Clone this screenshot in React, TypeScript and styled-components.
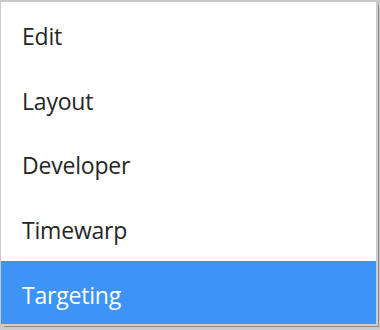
import React from 'react'
import styled, { createGlobalStyle } from 'styled-components'

const GlobalStyle = createGlobalStyle`
  html, body {
    margin: 0;
    padding: 0;
    background: #cacaca;
  }
`

const Frame = styled.div`
  width: 380px;
  height: 330px;
  box-sizing: border-box;
  padding: 2px 4px 0 1px;
  background: #cacaca;
  overflow: hidden;
`

const Menu = styled.ul`
  list-style: none;
  margin: 0;
  padding: 0;
  height: 322px;
  background: #fff;
  overflow: hidden;
  box-shadow: 2px 2px 0 #cdcdcd, 3px 3px 0 #8d8a80;
`

const Item = styled.li<{ $selected?: boolean }>`
  display: flex;
  align-items: center;
  box-sizing: border-box;
  height: 64.75px;
  padding: 3px 0 0 21px;
  font-family: 'Open Sans', sans-serif;
  font-size: 23px;
  letter-spacing: -0.2px;
  color: ${({ $selected }) => ($selected ? '#fff' : '#262626')};
  background: ${({ $selected }) => ($selected ? '#3d94f6' : 'transparent')};
`

const items = ['Edit', 'Layout', 'Developer', 'Timewarp', 'Targeting']

export default function App() {
  return (
    <>
      <GlobalStyle />
      <Frame>
        <Menu>
          {items.map((label) => (
            <Item key={label} $selected={label === 'Targeting'}>
              {label}
            </Item>
          ))}
        </Menu>
      </Frame>
    </>
  )
}
